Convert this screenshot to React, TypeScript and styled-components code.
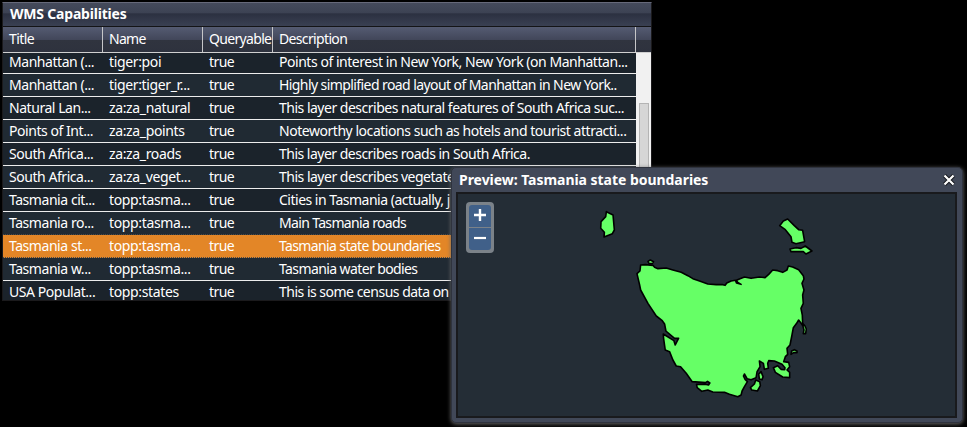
import React from "react";
import styled, { createGlobalStyle, css } from "styled-components";

const GlobalStyle = createGlobalStyle`
  * { box-sizing: border-box; }
  html, body { margin: 0; background: #000; overflow: hidden; }
`;

const Desktop = styled.main`
  position: relative;
  width: 967px;
  height: 427px;
  padding: 2px;
  background: #000;
  color: #fff;
  font-family: "Noto Sans", Tahoma, sans-serif;
  font-size: 14px;
`;

const Panel = styled.section`
  display: flex;
  flex-direction: column;
  width: 650px;
  height: 299px;
  border: 1px solid #1b1a1c;
  border-top-color: #66697a;
`;

const PanelTitle = styled.h1`
  flex: none;
  height: 24px;
  margin: 0;
  padding-left: 7px;
  line-height: 22px;
  font-size: 14px;
  font-weight: 700;
  letter-spacing: -0.2px;
  border-bottom: 1px solid #141416;
  background: linear-gradient(#444a5b 0, #3c4253 45%, #2b3040 46%, #3a4053 100%);
`;

const columns = css`
  display: grid;
  grid-template-columns: 100px 100px 70px 363px;
`;

const HeaderRow = styled.div`
  ${columns}
  flex: none;
  height: 26px;
  border-bottom: 1px solid #d0d0d0;
  background: linear-gradient(#555b72 0, #42475a 50%, #30343f 52%, #2e323e 100%);
`;

const HeaderCell = styled.div<{ $track: number }>`
  padding-left: 6px;
  line-height: 24px;
  white-space: nowrap;
  letter-spacing: ${(p) => p.$track}px;
  border-right: 1px solid #c6c6c8;
`;

const Body = styled.div`
  display: flex;
  flex: 1;
  min-height: 0;
`;

const Rows = styled.div`
  width: 633px;
  margin-top: -2px;
  overflow: hidden;
  clip-path: inset(2px 0 0 0);
`;

const Row = styled.div<{ $alt: boolean; $selected: boolean; $dotted: boolean }>`
  ${columns}
  height: 23px;
  background: ${(p) => (p.$selected ? "#e38627" : p.$alt ? "#202a33" : "#1b232b")};
  border-bottom: 1px ${(p) => (p.$dotted ? "dotted #4a4a4a" : "solid #ededed")};
`;

const Cell = styled.div<{ $track?: number }>`
  padding-left: 6px;
  line-height: 21px;
  white-space: nowrap;
  letter-spacing: ${(p) => p.$track ?? -0.3}px;
`;

const Scrollbar = styled.div`
  width: 15px;
  padding: 50px 2px 0 3px;
  background: #f1f1f1;
`;

const Thumb = styled.div`
  height: 100%;
  border: 1px solid #b4b4b4;
  background: #d6d6d6;
`;

const Window = styled.section`
  position: absolute;
  left: 451px;
  top: 167px;
  width: 512px;
  height: 256px;
  padding: 0 5px 5px 4px;
  border: 1px solid #2f333e;
  border-radius: 5px;
  background: #414858;
  box-shadow: 0 1px 4px 0 #686868;
`;

const WindowBar = styled.header`
  display: flex;
  justify-content: space-between;
  align-items: center;
  height: 24px;
  padding: 0 2px 0 3px;
`;

const WindowTitle = styled.h2`
  margin: 0;
  font-size: 14px;
  font-weight: 700;
  line-height: 24px;
  letter-spacing: -0.04px;
  white-space: nowrap;
`;

const CloseIcon = styled.svg`
  width: 12px;
  height: 12px;
`;

const MapView = styled.div`
  position: relative;
  height: 226px;
  border: 2px solid #191a1d;
  background: #242d36;
`;

const MapCanvas = styled.svg`
  display: block;
  width: 100%;
  height: 100%;
`;

const ZoomControl = styled.div`
  position: absolute;
  left: 8px;
  top: 8px;
  display: grid;
  gap: 1px;
  padding: 3px;
  border-radius: 4px;
  background: #7b8289;
`;

const ZoomButton = styled.button<{ $top?: boolean }>`
  display: block;
  width: 22px;
  height: 22px;
  padding: 0;
  border: 0;
  border-radius: ${(p) => (p.$top ? "3px 3px 0 0" : "0 0 3px 3px")};
  background: #406089;
`;

const headers: [string, number][] = [
  ["Title", -0.6],
  ["Name", -0.7],
  ["Queryable", -0.67],
  ["Description", -0.65],
];

const layers: [string, string, string, number][] = [
  ["Manhattan (...", "tiger:poi", "Points of interest in New York, New York (on Manhattan...", -0.46],
  ["Manhattan (...", "tiger:tiger_r...", "Highly simplified road layout of Manhattan in New York..", -0.58],
  ["Natural Lan...", "za:za_natural", "This layer describes natural features of South Africa suc...", -0.5],
  ["Points of Int...", "za:za_points", "Noteworthy locations such as hotels and tourist attracti...", -0.46],
  ["South Africa...", "za:za_roads", "This layer describes roads in South Africa.", -0.51],
  ["South Africa...", "za:za_veget...", "This layer describes vegetate", -0.5],
  ["Tasmania cit...", "topp:tasma...", "Cities in Tasmania (actually, j", -0.5],
  ["Tasmania ro...", "topp:tasma...", "Main Tasmania roads", -0.66],
  ["Tasmania st...", "topp:tasma...", "Tasmania state boundaries", -0.62],
  ["Tasmania w...", "topp:tasma...", "Tasmania water bodies", -0.6],
  ["USA Populat...", "topp:states", "This is some census data on", -0.5],
];
const selected = 8;

const mainland =
  "M48 30L62 29L85 31L90 37L100 41L125 39L145 45L170 52L190 62L205 71L225 78L250 87L275 89L295 89L302 91L307 84L320 78L333 76L336 84L350 88L340 82L336 76L345 72L360 66L380 70L405 66L422 68L433 58L445 45L460 47L475 52L488 45L492 33L505 36L523 44L537 62L539 72L533 85L539 105L535 120L537 145L530 160L534 180L535 205L542 213L546 222L544 236L537 236L539 225L536 213L527 200L523 195L517 205L507 218L503 240L497 270L488 280L490 298L483 305L478 320L493 322L496 335L488 345L496 352L496 368L475 366L453 352L447 338L460 332L470 343L481 344L482 338L473 328L450 318L433 317L430 325L432 340L420 343L417 325L405 318L407 335L398 350L395 368L380 374L368 371L360 357L357 363L362 373L369 380L360 395L353 408L350 420L340 425L315 418L300 412L265 411L250 405L232 409L218 398L216 388L242 388L252 390L256 384L249 379L243 383L203 380L185 355L168 335L155 333L145 315L135 290L122 285L117 250L116 237L148 257L152 270L162 250L150 250L124 228L120 207L113 197L95 183L70 145L48 105L45 90L37 56L46 48Z";

const islands = [
  "M70 19L77 15L87 20L83 26L73 25Z",
  "M500 298L502 288L510 284L518 288L518 293L508 293Z",
  "M403 357L410 350L416 365L413 374L405 372Z",
  "M378 398L390 387L394 375L406 380L408 392L399 408L382 405Z",
  "M-55-130L-35-120L-31-75L-37-64L-62-54L-61-68L-72-80L-71-100L-57-115Z",
  "M466-88L477-102L490-108L510-88L523-76L535-74L541-40L515-34L503-38L500-55L483-76Z",
  "M497-18L515-22L530-20L543-27L563-12L545-3L537-10L500-10Z",
];

export default function App() {
  return (
    <>
      <GlobalStyle />
      <Desktop>
        <Panel>
          <PanelTitle>WMS Capabilities</PanelTitle>
          <HeaderRow>
            {headers.map(([label, track]) => (
              <HeaderCell key={label} $track={track}>
                {label}
              </HeaderCell>
            ))}
          </HeaderRow>
          <Body>
            <Rows>
              {layers.map(([title, name, description, track], i) => (
                <Row
                  key={i}
                  $alt={i % 2 === 1}
                  $selected={i === selected}
                  $dotted={i === selected || i === selected - 1}
                >
                  <Cell $track={-0.45}>{title}</Cell>
                  <Cell $track={-0.36}>{name}</Cell>
                  <Cell $track={-0.6}>true</Cell>
                  <Cell $track={track}>{description}</Cell>
                </Row>
              ))}
            </Rows>
            <Scrollbar>
              <Thumb />
            </Scrollbar>
          </Body>
        </Panel>
        <Window>
          <WindowBar>
            <WindowTitle>Preview: Tasmania state boundaries</WindowTitle>
            <CloseIcon viewBox="0 0 12 12">
              <path d="M1.5 1.5L10.5 10.5M10.5 1.5L1.5 10.5" stroke="#15171c" strokeWidth="4" />
              <path d="M1.5 1.5L10.5 10.5M10.5 1.5L1.5 10.5" stroke="#fff" strokeWidth="2.2" />
            </CloseIcon>
          </WindowBar>
          <MapView>
            <MapCanvas viewBox="-501 -183 1494 666" preserveAspectRatio="none">
              <g fill="#66ff66" stroke="#000" strokeWidth="4.8" strokeLinejoin="round">
                <path d={mainland} />
                {islands.map((d) => (
                  <path key={d} d={d} />
                ))}
              </g>
            </MapCanvas>
            <ZoomControl>
              <ZoomButton $top aria-label="Zoom in">
                <svg width="22" height="22" viewBox="0 0 22 22">
                  <path d="M5 10H17M11 4V16" stroke="#fff" strokeWidth="2.4" />
                </svg>
              </ZoomButton>
              <ZoomButton aria-label="Zoom out">
                <svg width="22" height="22" viewBox="0 0 22 22">
                  <path d="M5 10H17" stroke="#fff" strokeWidth="2.2" />
                </svg>
              </ZoomButton>
            </ZoomControl>
          </MapView>
        </Window>
      </Desktop>
    </>
  );
}
